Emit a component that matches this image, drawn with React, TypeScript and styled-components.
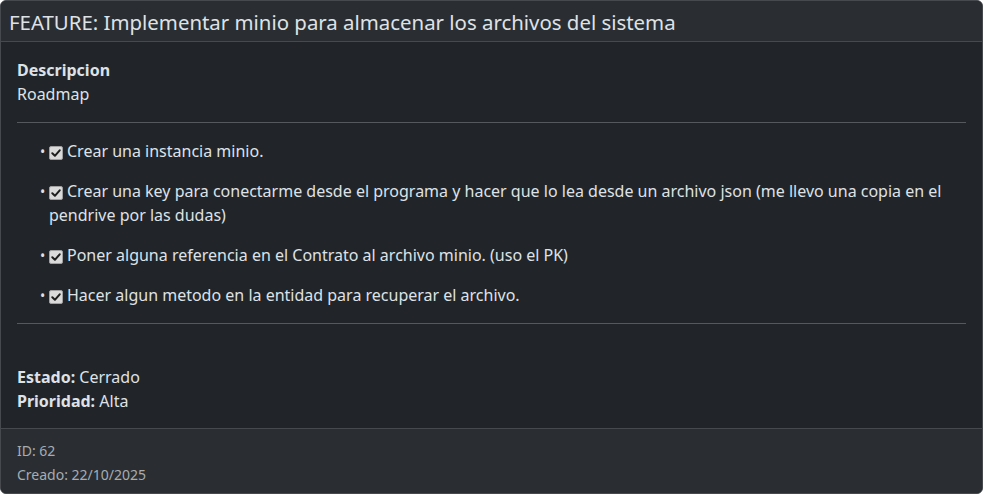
import styled, { createGlobalStyle } from "styled-components";

const GlobalStyle = createGlobalStyle`
  * { box-sizing: border-box; }
  body {
    margin: 0;
    background: #ffffff;
    font-family: "Noto Sans", "Open Sans", sans-serif;
    font-size: 16px;
    line-height: 24px;
    color: #dee2e6;
  }
`;

const tasks = [
  "Crear una instancia minio.",
  "Crear una key para conectarme desde el programa y hacer que lo lea desde un archivo json (me llevo una copia en el pendrive por las dudas)",
  "Poner alguna referencia en el Contrato al archivo minio. (uso el PK)",
  "Hacer algun metodo en la entidad para recuperar el archivo.",
];

function CheckMark() {
  return (
    <CheckBox>
      <svg width="10" height="10" viewBox="0 0 10 10">
        <path d="M1.3 5.3 L3.9 7.8 L8.7 2.3" fill="none" stroke="#1e1e1e" strokeWidth="2" strokeLinecap="round" strokeLinejoin="round" />
      </svg>
    </CheckBox>
  );
}

export default function App() {
  return (
    <>
      <GlobalStyle />
      <Card>
        <Header>
          <Title>FEATURE: Implementar minio para almacenar los archivos del sistema</Title>
        </Header>
        <Body>
          <Label>Descripcion</Label>
          <Text>Roadmap</Text>
          <Rule />
          <TaskList>
            {tasks.map((t) => (
              <Task key={t}>
                <CheckMark />
                {t}
              </Task>
            ))}
          </TaskList>
          <Rule />
          <Meta>
            <Text><b>Estado:</b> Cerrado</Text>
            <Text><b>Prioridad:</b> Alta</Text>
          </Meta>
        </Body>
        <Footer>
          <Small>ID: 62</Small>
          <Small>Creado: 22/10/2025</Small>
        </Footer>
      </Card>
    </>
  );
}

const Card = styled.div`
  width: 983px;
  background: #212529;
  border: 1px solid #464a4f;
  border-radius: 6px;
  overflow: hidden;
`;

const Header = styled.div`
  padding: 9px 8px 7px;
  background: #2a2e32;
  border-bottom: 1px solid #464a4f;
`;

const Title = styled.h5`
  margin: 0;
  font-size: 20.4px;
  font-weight: 400;
  line-height: 24px;
  color: #dee2e6;
`;

const Body = styled.div`
  padding: 16px 16px 15px;
`;

const Label = styled.div`
  font-weight: 700;
`;

const Text = styled.div`
  b { font-weight: 700; }
`;

const Rule = styled.hr`
  margin: 16px 0;
  border: 0;
  border-top: 1px solid #55595e;
`;

const TaskList = styled.ul`
  margin: 0;
  padding-left: 32px;
`;

const Task = styled.li`
  margin-bottom: 16px;
  &::marker {
    content: "• ";
    font-size: 14px;
  }
`;

const CheckBox = styled.span`
  display: inline-flex;
  align-items: center;
  justify-content: center;
  width: 14px;
  height: 14px;
  margin-right: 4px;
  vertical-align: -1px;
  background: #dadada;
  border: 1px solid #a0a0a0;
  border-radius: 2px;
`;

const Meta = styled.div`
  padding-top: 25px;
`;

const Footer = styled.div`
  padding: 10px 16px 6px;
  background: #2a2e32;
  border-top: 1px solid #464a4f;
`;

const Small = styled.div`
  font-size: 14px;
  line-height: 24px;
  color: #a7acb1;
`;
